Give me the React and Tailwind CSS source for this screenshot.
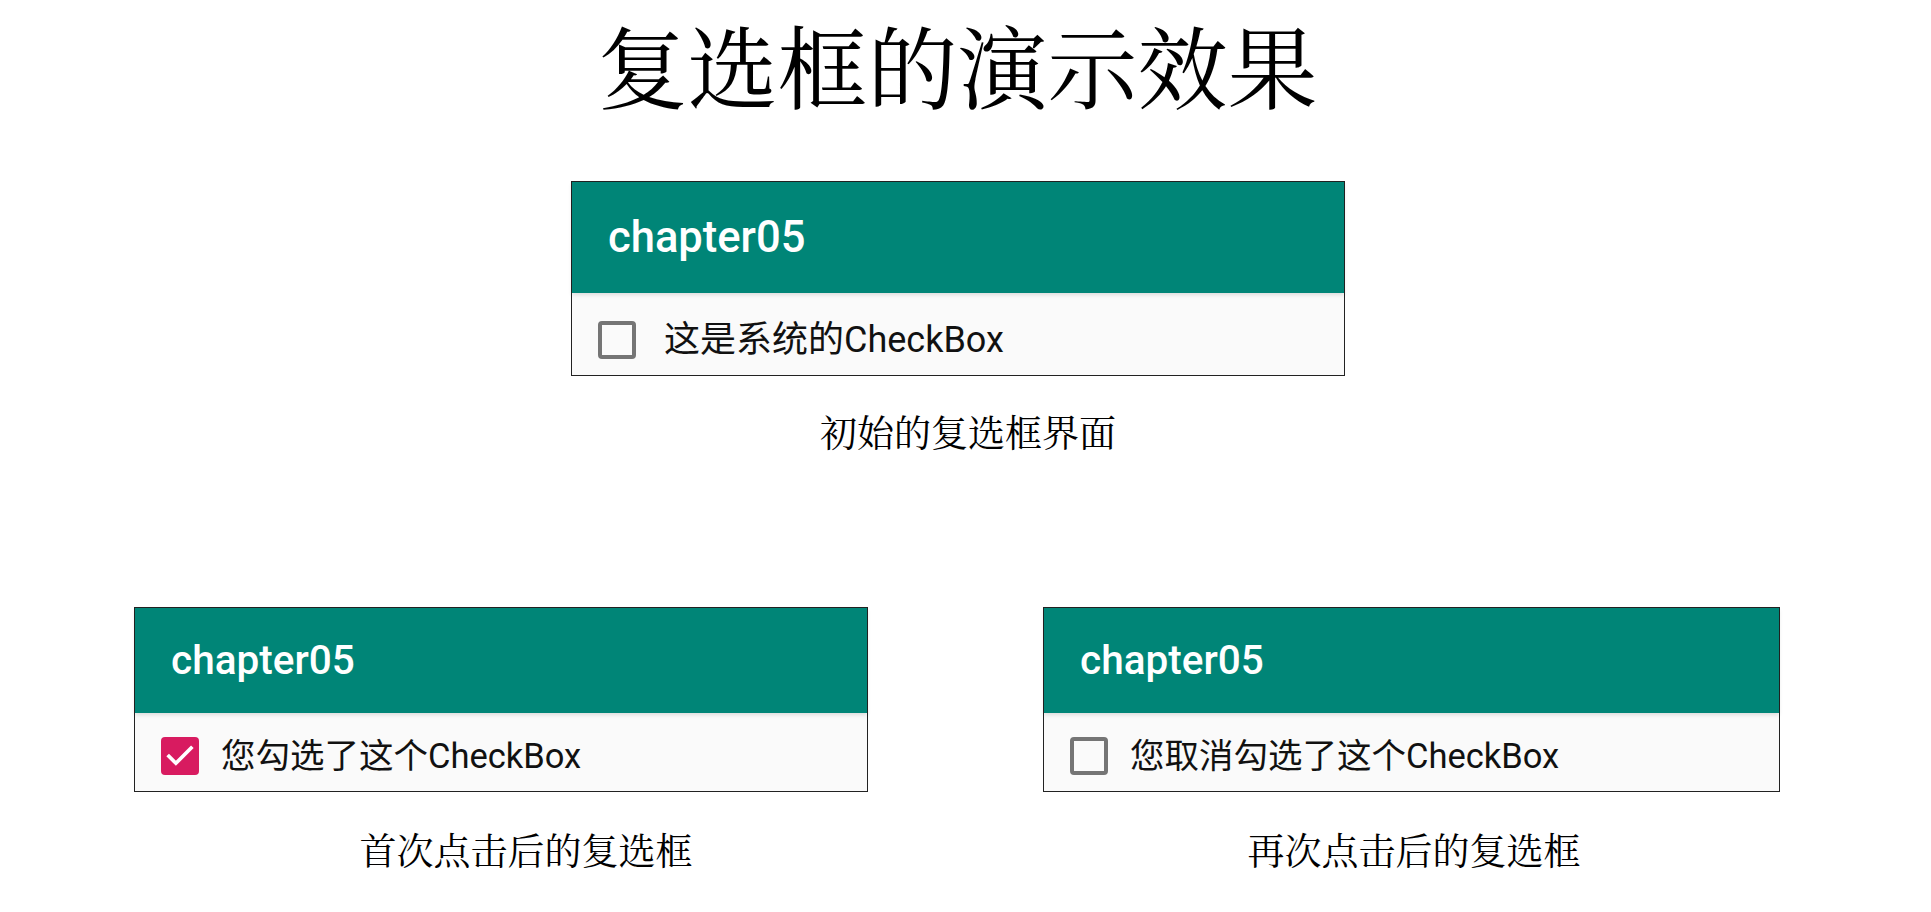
import React from "react";

const serif = {
  fontFamily:
    '"Noto Serif CJK SC", "Liberation Serif", "Noto Sans CJK SC", serif',
};

const CheckBox = ({ checked }) => {
  if (checked) {
    return (
      <div className="w-[38px] h-[38px] rounded-[4px] bg-[#d81b60] flex items-center justify-center shrink-0">
        <svg width="34" height="34" viewBox="0 0 24 24" fill="none">
          <path
            d="M4.2 12.2l4.9 4.9L19.8 6.4"
            stroke="white"
            strokeWidth="2.6"
            strokeLinecap="square"
          />
        </svg>
      </div>
    );
  }
  return (
    <div className="w-[38px] h-[38px] rounded-[4px] border-[4px] border-[#757575] shrink-0" />
  );
};

// one phone screen: app bar + a single checkbox row
const Screen = ({ width, headerH, titleSize, bodyPt, bodyPb, gap, textSize, label, checked }) => (
  <div
    className={`${width} border-[1.5px] border-[#222] bg-[#fafafa] font-['Roboto','Noto_Sans_CJK_SC',sans-serif]`}
  >
    <div
      className={`${headerH} bg-[#008577] flex items-center pl-[36px] relative z-10 shadow-[0_2px_4px_rgba(0,0,0,0.12)]`}
    >
      <span className={`text-white ${titleSize} font-medium leading-none`}>
        chapter05
      </span>
    </div>
    <div className={`flex items-center pl-[26px] ${bodyPt} ${bodyPb}`}>
      <CheckBox checked={checked} />
      <span className={`${gap} ${textSize} leading-none text-[#111]`}>
        {label}
      </span>
    </div>
  </div>
);

const App = () => {
  return (
    <div className="min-h-[912px] w-full bg-white flex flex-col">
      <h1
        className="text-center pr-[16px] pt-[13px] text-[90px] leading-[100px] font-normal text-black"
        style={serif}
      >
        复选框的演示效果
      </h1>

      <div className="flex flex-col items-center pr-[15px] mt-[68px]">
        <Screen
          width="w-[774px]"
          headerH="h-[111px]"
          titleSize="text-[43.5px]"
          bodyPt="pt-[28px]"
          bodyPb="pb-[16px]"
          gap="ml-[28px]"
          textSize="text-[36px]"
          label="这是系统的CheckBox"
          checked={false}
        />
        <p
          className="mt-[33px] pl-[20px] text-[37px] leading-[44px] text-black"
          style={serif}
        >
          初始的复选框界面
        </p>
      </div>

      <div className="flex pl-[134px] gap-[175px] mt-[154px]">
        <div className="flex flex-col">
          <Screen
            width="w-[734px]"
            headerH="h-[105px]"
            titleSize="text-[40.5px]"
            bodyPt="pt-[24px]"
            bodyPb="pb-[16px]"
            gap="ml-[22px]"
            textSize="text-[34.5px]"
            label="您勾选了这个CheckBox"
            checked={true}
          />
          <p
            className="mt-[35px] pl-[50px] text-center text-[37px] leading-[44px] text-black"
            style={serif}
          >
            首次点击后的复选框
          </p>
        </div>
        <div className="flex flex-col">
          <Screen
            width="w-[737px]"
            headerH="h-[105px]"
            titleSize="text-[40.5px]"
            bodyPt="pt-[24px]"
            bodyPb="pb-[16px]"
            gap="ml-[22px]"
            textSize="text-[34.5px]"
            label="您取消勾选了这个CheckBox"
            checked={false}
          />
          <p
            className="mt-[35px] pl-[5px] text-center text-[37px] leading-[44px] text-black"
            style={serif}
          >
            再次点击后的复选框
          </p>
        </div>
      </div>
    </div>
  );
};

export default App;
